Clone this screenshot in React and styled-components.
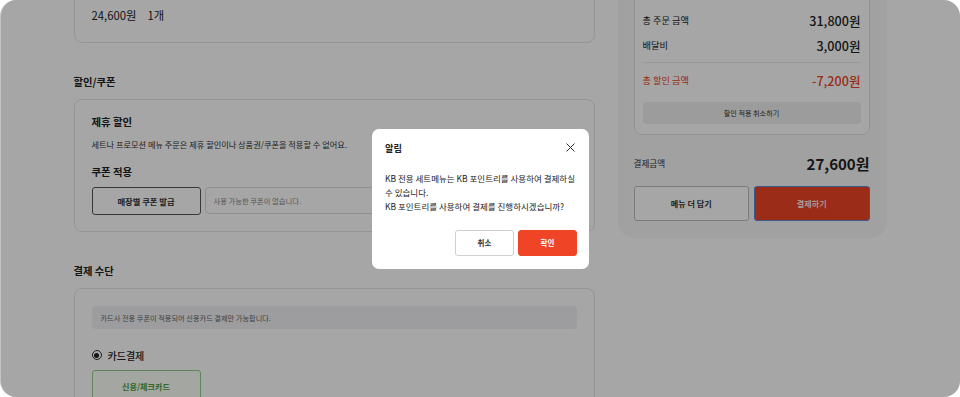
import styled, { createGlobalStyle } from "styled-components";

const GlobalStyle = createGlobalStyle`
  html, body {
    margin: 0;
    padding: 0;
    background: #ffffff;
  }
  * {
    box-sizing: border-box;
  }
  body {
    font-family: "Noto Sans CJK KR", "Noto Sans", sans-serif;
    color: #222;
  }
`;

const RED = "#ef4425";

export default function App() {
  return (
    <>
      <GlobalStyle />
      <Frame>
        <Page>
          <LeftColumn>
            <Card $pad="46px 17px 19px">
              <PriceLine>
                24,600원<Qty>1개</Qty>
              </PriceLine>
            </Card>

            <SectionTitle>할인/쿠폰</SectionTitle>
            <Card $pad="15px 17px 16px">
              <SubTitle>제휴 할인</SubTitle>
              <Desc>세트나 프로모션 메뉴 주문은 제휴 할인이나 상품권/쿠폰을 적용할 수 없어요.</Desc>
              <SubTitle $mt="15px">쿠폰 적용</SubTitle>
              <CouponRow>
                <OutlineButton>매장별 쿠폰 발급</OutlineButton>
                <CouponInput>사용 가능한 쿠폰이 없습니다.</CouponInput>
              </CouponRow>
            </Card>

            <SectionTitle>결제 수단</SectionTitle>
            <Card $pad="17px 17px 20px">
              <InfoBox>카드사 전용 쿠폰이 적용되어 신용카드 결제만 가능합니다.</InfoBox>
              <RadioRow>
                <Radio />
                카드결제
              </RadioRow>
              <PayTypeButton>신용/체크카드</PayTypeButton>
            </Card>
          </LeftColumn>

          <SummaryPanel>
            <SummaryCard>
              <SumRow>
                <SumLabel>총 주문 금액</SumLabel>
                <SumValue>31,800원</SumValue>
              </SumRow>
              <SumRow $mt="7px">
                <SumLabel>배달비</SumLabel>
                <SumValue>3,000원</SumValue>
              </SumRow>
              <Divider />
              <SumRow $red>
                <SumLabel>총 할인 금액</SumLabel>
                <SumValue>-7,200원</SumValue>
              </SumRow>
              <CancelDiscount>할인 적용 취소하기</CancelDiscount>
            </SummaryCard>

            <TotalRow>
              <TotalLabel>결제금액</TotalLabel>
              <TotalValue>27,600원</TotalValue>
            </TotalRow>

            <ActionRow>
              <ActionButton>메뉴 더 담기</ActionButton>
              <ActionButton $primary>결제하기</ActionButton>
            </ActionRow>
          </SummaryPanel>
        </Page>

        <Overlay>
          <Modal>
            <ModalHeader>
              <ModalTitle>알림</ModalTitle>
              <CloseButton aria-label="닫기">
                <svg width="9" height="9" viewBox="0 0 9 9">
                  <path d="M0.5 0.5 L8.5 8.5 M8.5 0.5 L0.5 8.5" stroke="#333" strokeWidth="1" fill="none" />
                </svg>
              </CloseButton>
            </ModalHeader>
            <ModalBody>
              KB 전용 세트메뉴는 KB 포인트리를 사용하여 결제하실 수 있습니다.
              <br />
              KB 포인트리를 사용하여 결제를 진행하시겠습니까?
            </ModalBody>
            <ModalFooter>
              <ModalButton>취소</ModalButton>
              <ModalButton $primary>확인</ModalButton>
            </ModalFooter>
          </Modal>
        </Overlay>
      </Frame>
    </>
  );
}

const Frame = styled.div`
  position: relative;
  width: 960px;
  height: 397px;
  border-radius: 16px;
  overflow: hidden;
  background: #ffffff;
  border-left: 1.5px solid #c4c4c4;
`;

const Page = styled.div`
  display: flex;
  align-items: flex-start;
  gap: 23px;
  padding-left: 72.5px;
  margin-top: -40px;
`;

const LeftColumn = styled.div`
  width: 521px;
  display: flex;
  flex-direction: column;
`;

const Card = styled.div`
  border: 1px solid #e4e4e4;
  border-radius: 8px;
  background: #fff;
  padding: ${(p) => p.$pad};
`;

const PriceLine = styled.div`
  font-size: 11.3px;
  line-height: 16px;
  color: #222;
`;

const Qty = styled.span`
  margin-left: 11px;
`;

const SectionTitle = styled.h2`
  margin: 32px 0 10px;
  font-size: 10.3px;
  line-height: 14px;
  font-weight: 700;
  color: #222;
`;

const SubTitle = styled.div`
  margin-top: ${(p) => p.$mt || "0"};
  font-size: 10.4px;
  line-height: 14px;
  font-weight: 700;
  color: #222;
`;

const Desc = styled.p`
  margin: 9px 0 0;
  font-size: 8.2px;
  line-height: 12px;
  color: #333;
`;

const CouponRow = styled.div`
  display: flex;
  gap: 4px;
  margin-top: 8px;
  height: 28px;
`;

const OutlineButton = styled.button`
  width: 109px;
  height: 28px;
  border: 1px solid #555;
  border-radius: 3px;
  background: #fff;
  font-family: inherit;
  font-size: 8.3px;
  font-weight: 700;
  color: #333;
  padding: 0;
`;

const CouponInput = styled.div`
  flex: 1;
  height: 27px;
  border: 1px solid #dcdcdc;
  border-radius: 4px;
  display: flex;
  align-items: center;
  padding-left: 8px;
  font-size: 7.3px;
  color: #888;
`;

const InfoBox = styled.div`
  height: 23px;
  border-radius: 4px;
  background: #f1f2f4;
  display: flex;
  align-items: center;
  padding-left: 9px;
  font-size: 7.2px;
  color: #666;
`;

const RadioRow = styled.label`
  display: flex;
  align-items: center;
  gap: 6px;
  margin-top: 19px;
  height: 14px;
  font-size: 10px;
  font-weight: 500;
  color: #222;
`;

const Radio = styled.span`
  width: 10px;
  height: 10px;
  border: 1px solid #333;
  border-radius: 50%;
  display: flex;
  align-items: center;
  justify-content: center;
  &::after {
    content: "";
    width: 5px;
    height: 5px;
    border-radius: 50%;
    background: #222;
  }
`;

const PayTypeButton = styled.button`
  margin-top: 8px;
  width: 109px;
  height: 32px;
  border: 1px solid #8fcf84;
  border-radius: 3px;
  background: #fafff8;
  font-family: inherit;
  font-size: 8.1px;
  font-weight: 700;
  color: #4a9f3a;
  padding: 0;
`;

const SummaryPanel = styled.aside`
  width: 269px;
  background: #f8f8f8;
  border-radius: 0 0 16px 16px;
  padding: 16px 17px 17px 16px;
`;

const SummaryCard = styled.div`
  background: #fff;
  border: 1px solid #e2e2e2;
  border-radius: 8px;
  padding: 34px 8px 10px;
`;

const SumRow = styled.div`
  display: flex;
  justify-content: space-between;
  align-items: center;
  height: 18px;
  margin-top: ${(p) => p.$mt || "0"};
  color: ${(p) => (p.$red ? RED : "#222")};
`;

const SumLabel = styled.span`
  font-size: 9.2px;
`;

const SumValue = styled.span`
  font-size: 12.6px;
  font-weight: 500;
`;

const Divider = styled.hr`
  border: 0;
  border-top: 1px solid #ececec;
  margin: 8px 0 8px;
`;

const CancelDiscount = styled.button`
  display: block;
  width: 100%;
  height: 22px;
  margin-top: 13px;
  border: 0;
  border-radius: 4px;
  background: #f0f0f0;
  font-family: inherit;
  font-size: 7.1px;
  color: #333;
  padding: 0;
`;

const TotalRow = styled.div`
  display: flex;
  justify-content: space-between;
  align-items: center;
  height: 20px;
  margin-top: 18px;
`;

const TotalLabel = styled.span`
  font-size: 8.6px;
  color: #333;
`;

const TotalValue = styled.span`
  font-size: 15px;
  font-weight: 700;
  color: #222;
`;

const ActionRow = styled.div`
  display: grid;
  grid-template-columns: 1fr 1fr;
  gap: 5px;
  margin-top: 13px;
`;

const ActionButton = styled.button`
  height: 35px;
  border-radius: 3px;
  font-family: inherit;
  font-size: 8.1px;
  font-weight: ${(p) => (p.$primary ? 500 : 700)};
  padding: 0;
  border: 1px solid ${(p) => (p.$primary ? "#5b8ddb" : "#bdbdbd")};
  background: ${(p) => (p.$primary ? RED : "#fff")};
  color: ${(p) => (p.$primary ? "#fff" : "#333")};
`;

const Overlay = styled.div`
  position: absolute;
  inset: 0;
  background: rgba(0, 0, 0, 0.35);
  display: flex;
  align-items: center;
  justify-content: center;
`;

const Modal = styled.div`
  width: 217px;
  height: 140px;
  background: #fff;
  border-radius: 7px;
  padding: 12px 12px 13px 13px;
  display: flex;
  flex-direction: column;
`;

const ModalHeader = styled.div`
  display: flex;
  justify-content: space-between;
  align-items: center;
  height: 14px;
`;

const ModalTitle = styled.h3`
  margin: 0;
  font-size: 9.2px;
  font-weight: 700;
  color: #222;
`;

const CloseButton = styled.button`
  border: 0;
  background: none;
  padding: 0;
  margin-right: 2px;
  width: 9px;
  height: 9px;
  display: flex;
`;

const ModalBody = styled.p`
  margin: 16px 0 0;
  font-size: 8.5px;
  line-height: 14px;
  color: #222;
`;

const ModalFooter = styled.div`
  margin-top: auto;
  display: flex;
  justify-content: flex-end;
  gap: 4px;
`;

const ModalButton = styled.button`
  width: 59px;
  height: 26px;
  border-radius: 3px;
  font-family: inherit;
  font-size: 7.5px;
  font-weight: 700;
  padding: 0;
  border: 1px solid ${(p) => (p.$primary ? RED : "#cfcfcf")};
  background: ${(p) => (p.$primary ? RED : "#fff")};
  color: ${(p) => (p.$primary ? "#fff" : "#333")};
`;
